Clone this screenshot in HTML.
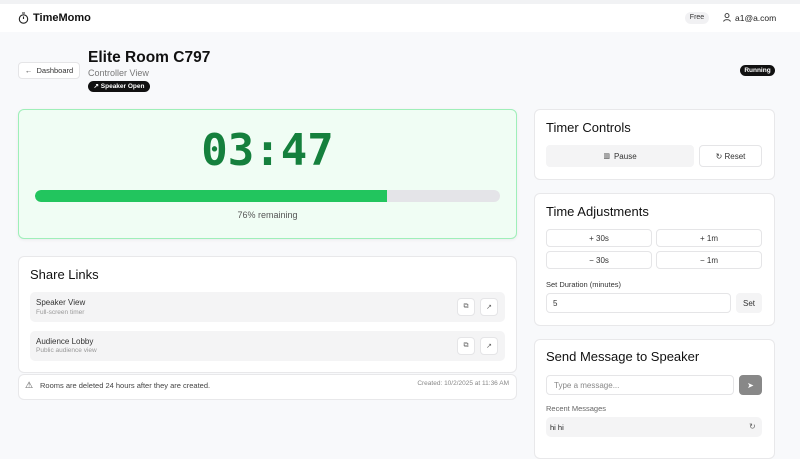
<!DOCTYPE html><html><head><style>
*{box-sizing:border-box;margin:0;padding:0}
body{width:800px;height:452px;overflow:hidden;background:#f8f9fb;font-family:"Liberation Sans",sans-serif;color:#111;position:relative}
.a{position:absolute}
.card{position:absolute;background:#fff;border:1px solid #e8e8ea;border-radius:6px}
.btn{position:absolute;background:#fff;border:1px solid #e5e5e7;border-radius:4px;font-size:8px;color:#333;display:flex;align-items:center;justify-content:center;gap:4px}
.h{position:absolute;font-size:13px;color:#111}
svg{display:block}
</style></head><body>
<div class="a" style="left:0;top:0;width:800px;height:4px;background:#f1f2f4"></div>
<div class="a" style="left:0;top:4px;width:800px;height:28px;background:#fff"></div>
<svg class="a" style="left:18px;top:12px" width="11" height="12" viewBox="0 0 11 12"><circle cx="5.5" cy="7" r="4.2" fill="none" stroke="#222" stroke-width="1.1"/><path d="M4 1h3M5.5 7V4.5" stroke="#222" stroke-width="1.1"/></svg>
<div class="a" style="left:33px;top:12px;font-size:11px;font-weight:bold">TimeMomo</div>
<div class="a" style="left:685px;top:12px;width:24px;height:12px;border-radius:6px;background:#f1f1f3;font-size:7px;text-align:center;line-height:12px;color:#333">Free</div>
<svg class="a" style="left:723px;top:13px" width="8" height="9" viewBox="0 0 8 9"><circle cx="4" cy="2.6" r="2" fill="none" stroke="#333" stroke-width=".9"/><path d="M.6 8.6c.4-2.5 6.4-2.5 6.8 0" fill="none" stroke="#333" stroke-width=".9"/></svg>
<div class="a" style="left:735px;top:13px;font-size:8.5px;color:#222">a1@a.com</div>

<div class="btn" style="left:18px;top:62px;width:62px;height:17px;font-size:7.5px">← &nbsp;Dashboard</div>
<div class="a" style="left:88px;top:49px;font-size:15.5px;font-weight:bold">Elite Room C797</div>
<div class="a" style="left:88px;top:68px;font-size:9px;color:#777">Controller View</div>
<div class="a" style="left:88px;top:81px;width:62px;height:11px;border-radius:6px;background:#111;color:#fff;font-size:6.5px;font-weight:bold;line-height:11px;text-align:center">↗ Speaker Open</div>
<div class="a" style="left:740px;top:65px;width:35px;height:11px;border-radius:6px;background:#111;color:#fff;font-size:6.5px;font-weight:bold;line-height:11px;text-align:center">Running</div>

<div class="card" style="left:18px;top:109px;width:499px;height:130px;background:#f0fdf4;border-color:#9fefb9;box-shadow:0 1px 3px rgba(0,0,0,.06)"></div>
<div class="a" style="left:18px;top:123px;width:499px;text-align:center;font-family:'DejaVu Sans Mono',monospace;font-weight:bold;font-size:44px;color:#15803d;line-height:56px">03:47</div>
<div class="a" style="left:35px;top:190px;width:465px;height:12px;border-radius:6px;background:#e4e4e8;overflow:hidden"><div style="width:352px;height:12px;background:#22c55e;border-radius:6px 0 0 6px"></div></div>
<div class="a" style="left:18px;top:210px;width:499px;text-align:center;font-size:9px;color:#555">76% remaining</div>

<div class="card" style="left:18px;top:256px;width:499px;height:117px"></div>
<div class="h" style="left:30px;top:267px">Share Links</div>
<div class="a" style="left:30px;top:292px;width:475px;height:30px;background:#f4f4f5;border-radius:5px"></div>
<div class="a" style="left:36px;top:298px;font-size:8px;color:#333">Speaker View</div>
<div class="a" style="left:36px;top:309px;font-size:6.5px;color:#999">Full-screen timer</div>
<div class="a" style="left:30px;top:331px;width:475px;height:30px;background:#f4f4f5;border-radius:5px"></div>
<div class="a" style="left:36px;top:337px;font-size:8px;color:#333">Audience Lobby</div>
<div class="a" style="left:36px;top:347px;font-size:6.5px;color:#999">Public audience view</div>
<div class="btn" style="left:457px;top:298px;width:18px;height:18px;font-size:7px;color:#666">⧉</div>
<div class="btn" style="left:480px;top:298px;width:18px;height:18px;font-size:7px;color:#666">↗</div>
<div class="btn" style="left:457px;top:337px;width:18px;height:18px;font-size:7px;color:#666">⧉</div>
<div class="btn" style="left:480px;top:337px;width:18px;height:18px;font-size:7px;color:#666">↗</div>
<div class="card" style="left:18px;top:374px;width:499px;height:26px"></div>
<div class="a" style="left:25px;top:380px;font-size:9px;color:#444">⚠</div>
<div class="a" style="left:40px;top:381px;font-size:7.5px;color:#444">Rooms are deleted 24 hours after they are created.</div>
<div class="a" style="left:380px;top:380px;width:129px;text-align:right;font-size:6.5px;color:#888">Created: 10/2/2025 at 11:36 AM</div>

<div class="card" style="left:534px;top:109px;width:241px;height:71px"></div>
<div class="h" style="left:546px;top:120px">Timer Controls</div>
<div class="btn" style="left:546px;top:145px;width:148px;height:22px;background:#f4f4f5;border-color:#f4f4f5"><span style="font-size:7px">▥</span> Pause</div>
<div class="btn" style="left:699px;top:145px;width:63px;height:22px">↻ Reset</div>

<div class="card" style="left:534px;top:193px;width:241px;height:133px"></div>
<div class="h" style="left:546px;top:204px">Time Adjustments</div>
<div class="btn" style="left:546px;top:229px;width:106px;height:18px">+ 30s</div>
<div class="btn" style="left:656px;top:229px;width:106px;height:18px">+ 1m</div>
<div class="btn" style="left:546px;top:251px;width:106px;height:18px">− 30s</div>
<div class="btn" style="left:656px;top:251px;width:106px;height:18px">− 1m</div>
<div class="a" style="left:546px;top:280px;font-size:7.5px;color:#333">Set Duration (minutes)</div>
<div class="btn" style="left:546px;top:293px;width:185px;height:20px;justify-content:flex-start;padding-left:6px">5</div>
<div class="btn" style="left:736px;top:293px;width:26px;height:20px;background:#f4f4f5;border-color:#f4f4f5">Set</div>

<div class="card" style="left:534px;top:339px;width:241px;height:120px"></div>
<div class="h" style="left:546px;top:349px">Send Message to Speaker</div>
<div class="btn" style="left:546px;top:375px;width:188px;height:20px;justify-content:flex-start;padding-left:7px;color:#888">Type a message...</div>
<div class="btn" style="left:739px;top:375px;width:23px;height:20px;background:#888;border-color:#888;color:#fff">➤</div>
<div class="a" style="left:546px;top:404px;font-size:7.5px;color:#666">Recent Messages</div>
<div class="a" style="left:546px;top:417px;width:216px;height:20px;background:#f4f4f5;border-radius:5px"></div>
<div class="a" style="left:550px;top:423px;font-size:7.5px;color:#222">hi hi</div>
<div class="a" style="left:749px;top:422px;font-size:8px;color:#666">↻</div>
</body></html>
